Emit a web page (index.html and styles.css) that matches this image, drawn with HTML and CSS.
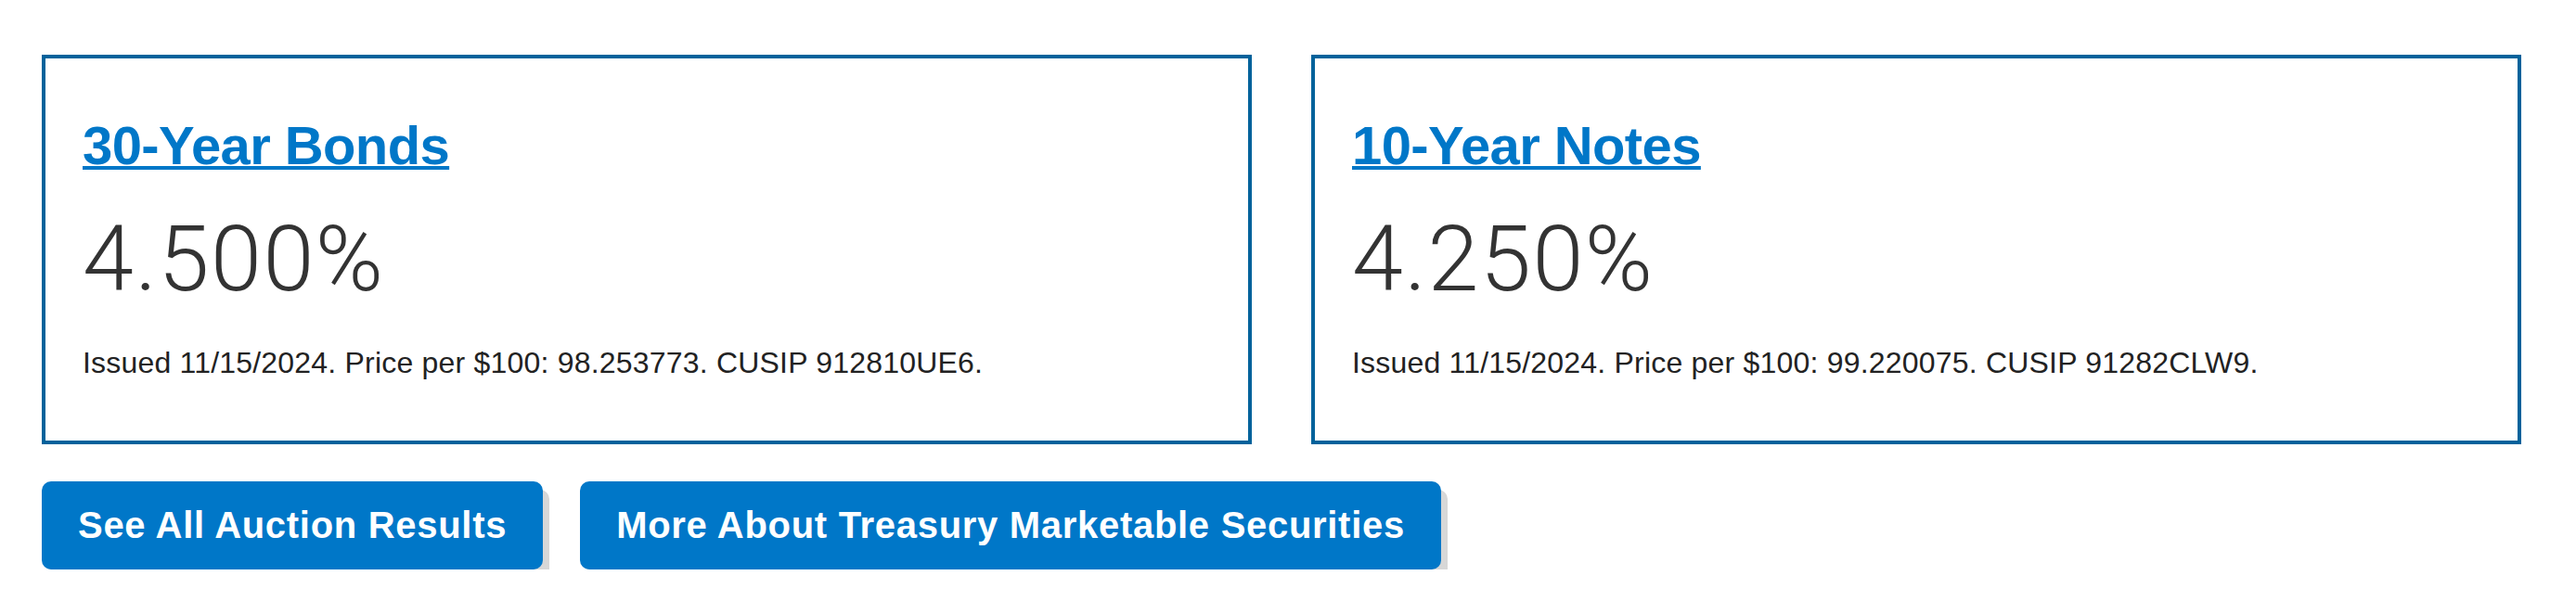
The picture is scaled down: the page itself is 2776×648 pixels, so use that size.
FILE: index.html
```html
<!DOCTYPE html>
<html lang="en">
<head>
<meta charset="utf-8">
<title>Treasury Securities</title>
<link rel="stylesheet" href="styles.css">
</head>
<body>
<main class="page">
  <section class="cards">
    <article class="card">
      <h2 class="card-title"><a href="#">30-Year Bonds</a></h2>
      <div class="rate">4.500%</div>
      <p class="detail">Issued 11/15/2024. Price per $100: 98.253773. CUSIP 912810UE6.</p>
    </article>
    <article class="card">
      <h2 class="card-title"><a href="#">10-Year Notes</a></h2>
      <div class="rate">4.250%</div>
      <p class="detail">Issued 11/15/2024. Price per $100: 99.220075. CUSIP 91282CLW9.</p>
    </article>
  </section>
  <nav class="actions">
    <a class="btn" href="#">See All Auction Results</a>
    <a class="btn" href="#">More About Treasury Marketable Securities</a>
  </nav>
</main>
</body>
</html>
```

FILE: styles.css
```css
html, body {
  margin: 0;
  padding: 0;
  background: #ffffff;
}

.page {
  padding: 59px 0 0 45px;
  font-family: "Liberation Sans", Arial, sans-serif;
}

.cards {
  display: flex;
  gap: 64px;
}

.card {
  box-sizing: border-box;
  width: 1304px;
  height: 420px;
  border: 4px solid #00629b;
  padding: 59px 40px 0 40px;
  display: flex;
  flex-direction: column;
}

.card-title {
  margin: 0;
  font-size: 58px;
  line-height: 70px;
  font-weight: 700;
  letter-spacing: -0.6px;
}

.card-title a {
  color: #0077c8;
  text-decoration: underline;
  text-decoration-thickness: 4px;
  text-underline-offset: 2px;
}

.rate {
  margin-top: 37px;
  font-family: Roboto, "Liberation Sans", sans-serif;
  font-weight: 300;
  font-size: 99px;
  line-height: 100px;
  letter-spacing: 1.5px;
  color: #333333;
}

.detail {
  margin: 42px 0 0 0;
  font-size: 32px;
  line-height: 40px;
  letter-spacing: 0.2px;
  color: #222222;
}

.actions {
  display: flex;
  gap: 40px;
  margin-top: 40px;
}

.btn {
  display: block;
  padding: 24px 39px;
  font-size: 40px;
  line-height: 47px;
  font-weight: 700;
  letter-spacing: 0.7px;
  color: #ffffff;
  background: #0077c8;
  border-radius: 10px;
  text-decoration: none;
  box-shadow: 7px 9px 0 #d7d7d7;
}
```
